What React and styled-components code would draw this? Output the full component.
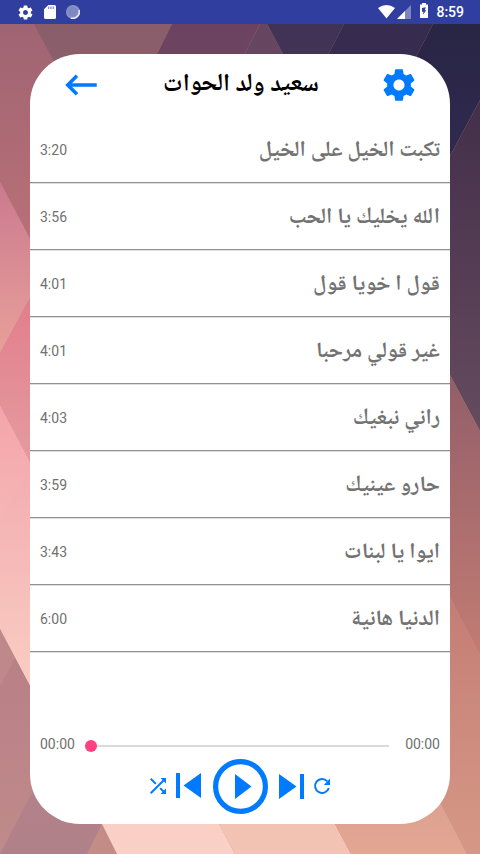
import styled, {createGlobalStyle} from "styled-components";
import {MdKeyboardBackspace, MdShuffle} from "react-icons/md";

const GlobalStyle = createGlobalStyle`
  * {
    box-sizing: border-box;
  }

  body {
    margin: 0;
    overflow: hidden;
    font-family: Roboto, sans-serif;
  }
`;

const Screen = styled.div`
  position: relative;
  display: flex;
  flex-direction: column;
  width: 480px;
  height: 854px;
  overflow: hidden;
`;

const Backdrop = styled.svg`
  position: absolute;
  inset: 0;
  z-index: -1;
`;

const StatusBar = styled.div`
  display: flex;
  align-items: center;
  justify-content: space-between;
  height: 24px;
  flex: none;
  padding: 0 16px 0 17px;
  background: #303e9f;
  color: #fff;
`;

const StatusGroup = styled.div`
  display: flex;
  align-items: center;
  gap: ${(props) => props.$gap};

  svg {
    display: block;
  }
`;

const Clock = styled.span`
  font-size: 14px;
  font-weight: 500;
  line-height: 24px;
`;

const Card = styled.main`
  display: flex;
  flex-direction: column;
  flex: 1;
  margin: 30px;
  border-radius: 50px;
  background: #fff;
  overflow: hidden;
`;

const Header = styled.header`
  display: flex;
  align-items: center;
  justify-content: space-between;
  height: 62px;
  flex: none;
  padding: 0 32px 0 30px;
`;

const IconButton = styled.button`
  display: flex;
  padding: 0;
  border: 0;
  background: none;
  color: #007aff;
`;

const Title = styled.h1`
  margin: 0;
  color: #000;
  font-family: "Noto Naskh Arabic UI", "Noto Naskh Arabic", "Noto Sans Arabic", "DejaVu Sans", sans-serif;
  font-size: 24.5px;
  font-weight: 700;
  line-height: 30px;
  white-space: nowrap;
`;

const SongList = styled.ul`
  margin: 0;
  padding: 0;
  list-style: none;
`;

const SongRow = styled.li`
  display: flex;
  align-items: center;
  justify-content: space-between;
  height: 67px;
  padding: 2px 10px 0;
  border-bottom: 1px solid #929292;
  box-shadow: 0 1px 0 #dedede;
  color: #737373;
`;

const Time = styled.span`
  font-size: 14px;
  line-height: 20px;
  color: #707070;
`;

const SongName = styled.span`
  font-family: "Noto Naskh Arabic UI", "Noto Naskh Arabic", "Noto Sans Arabic", "DejaVu Sans", sans-serif;
  font-size: 22px;
  font-weight: 700;
  line-height: 30px;
  white-space: nowrap;
`;

const Player = styled.footer`
  margin-top: auto;
  height: 91px;
`;

const Progress = styled.div`
  display: flex;
  align-items: center;
  height: 22px;
  padding: 0 10px;
`;

const Track = styled.div`
  display: flex;
  align-items: center;
  flex: 1;
  margin: 4px 16px 0 10px;

  &::before {
    content: "";
    width: 12px;
    height: 12px;
    border-radius: 50%;
    background: #ff4081;
  }

  &::after {
    content: "";
    flex: 1;
    height: 2px;
    background: #dadada;
  }
`;

const Controls = styled.div`
  display: flex;
  align-items: center;
  justify-content: center;
  height: 62px;
`;

const SkipIcon = styled.svg`
  display: block;
  margin: ${(props) => props.$margin};
  transform: ${(props) => (props.$flip ? "scaleX(-1)" : "none")};
`;

const songs = [
    {name: "تكبت الخيل على الخيل", time: "3:20"},
    {name: "الله يخليك يا الحب", time: "3:56"},
    {name: "قول ا خويا قول", time: "4:01"},
    {name: "غير قولي مرحبا", time: "4:01"},
    {name: "راني نبغيك", time: "4:03"},
    {name: "حارو عينيك", time: "3:59"},
    {name: "ايوا يا لبنات", time: "3:43"},
    {name: "الدنيا هانية", time: "6:00"},
]

// every facet is a polygon with its own top-to-bottom fade
const facets = [
    {points: "0,24 172,24 120,120 30,239 0,182", from: [24, "#9f6473"], to: [239, "#b97076"]},
    {points: "34,24 172,24 142,84 66,84", from: [24, "#895d69"], to: [84, "#8d5f6c"]},
    {points: "172,24 260,24 229,84 142,84", from: [24, "#6b4361"], to: [84, "#70455f"]},
    {points: "260,24 267,24 299,84 229,84", from: [24, "#65455f"], to: [84, "#684861"]},
    {points: "267,24 344,24 313,84 299,84", from: [24, "#403355"], to: [84, "#443455"]},
    {points: "344,24 433,24 402,84 313,84", from: [24, "#352b4e"], to: [84, "#3b2f51"]},
    {points: "433,24 480,24 480,100 450,156 402,84", from: [24, "#292544"], to: [156, "#302a50"]},
    {points: "480,100 480,431 450,375 450,156", from: [100, "#432f4a"], to: [431, "#654b5e"]},
    {points: "450,375 480,431 480,655 450,597", from: [375, "#935e69"], to: [655, "#c27c73"]},
    {points: "450,597 480,655 480,854 467,854 441,803 430,780", from: [597, "#c47d75"], to: [854, "#d69886"]},
    {points: "0,182 30,239 30,298 0,353", from: [182, "#cb798f"], to: [353, "#e8a099"]},
    {points: "30,298 30,462 0,405 0,353", from: [298, "#e27e8c"], to: [462, "#e59b9f"]},
    {points: "0,405 30,462 30,686 0,629", from: [405, "#f4a4aa"], to: [686, "#f9d0c5"]},
    {points: "30,465 30,686 0,629 0,520", from: [465, "#f3acb0"], to: [686, "#f9cdc2"]},
    {points: "0,629 30,686 102,824 87,854 0,854", from: [629, "#bf888a"], to: [854, "#be8788"]},
    {points: "15,658 30,686 60,740 33,791 0,853 0,687", from: [658, "#b98087"], to: [854, "#c08a8a"]},
    {points: "33,791 60,740 102,824 87,854 0,854", from: [740, "#b38189"], to: [854, "#b1818a"]},
    {points: "102,824 117,854 87,854", from: [824, "#c48c86"], to: [854, "#c38c87"]},
    {points: "102,824 81,784 198,784 235,854 117,854", from: [784, "#f9cdc2"], to: [854, "#fad1c7"]},
    {points: "219,824 335,824 351,854 235,854", from: [824, "#f2c2b2"], to: [854, "#f3c4b5"]},
    {points: "335,824 320,794 436,794 467,854 351,854", from: [794, "#dda08f"], to: [854, "#e2a693"]},
]

function Wallpaper() {
    return (
        <Backdrop width="480" height="854" viewBox="0 0 480 854" aria-hidden="true">
            <defs>
                {facets.map(({from, to}, i) => (
                    <linearGradient key={i} id={`facet${i}`} gradientUnits="userSpaceOnUse" x1="0" x2="0" y1={from[0]} y2={to[0]}>
                        <stop offset="0" stopColor={from[1]}/>
                        <stop offset="1" stopColor={to[1]}/>
                    </linearGradient>
                ))}
            </defs>
            <rect width="480" height="854" fill="#bd8686"/>
            {facets.map(({points}, i) => <polygon key={i} points={points} fill={`url(#facet${i})`}/>)}
        </Backdrop>
    )
}

// eslint-disable-next-line react/prop-types
function GearIcon({size}) {
    return (
        <svg width={size} height={size} viewBox="0 0 24 24" fill="currentColor">
            <path d="M19.43 12.98c.04-.32.07-.64.07-.98s-.03-.66-.07-.98l2.110-1.650c.19-.15.24-.42.12-.64l-2-3.460c-.12-.22-.39-.3-.61-.22l-2.490 1c-.52-.4-1.080-.73-1.690-.98l-.38-2.650C14.460 2.180 14.250 2 14 2h-4c-.25 0-.46.18-.49.42l-.38 2.650c-.61.25-1.170.59-1.690.98l-2.490-1c-.23-.09-.49 0-.61.22l-2 3.460c-.13.22-.07.49.12.64l2.110 1.650c-.04.32-.07.65-.07.98s.03.66.07.98l-2.110 1.650c-.19.15-.24.42-.12.64l2 3.460c.12.22.39.3.61.22l2.490-1c.52.4 1.080.73 1.690.98l.38 2.650c.03.24.24.42.49.42h4c.25 0 .46-.18.49-.42l.38-2.650c.61-.25 1.170-.59 1.690-.98l2.490 1c.23.09.49 0 .61-.22l2-3.460c.12-.22.07-.49-.12-.64l-2.110-1.650zM12 15.500c-1.930 0-3.500-1.570-3.500-3.500s1.570-3.500 3.500-3.500 3.500 1.570 3.500 3.500-1.570 3.500-3.500 3.500z"/>
        </svg>
    )
}

function SdCardIcon() {
    return (
        <svg width="12" height="14" viewBox="0 0 12 14">
            <path fill="#fff" d="M4.300 0h6.200A1.500 1.500 0 0 1 12 1.500v11a1.500 1.500 0 0 1-1.500 1.500h-9A1.500 1.500 0 0 1 0 12.500V4.300z"/>
            <path fill="#8c93c9" d="M4 1.500h1.300v2.500H4zM6.300 1.500h1.300v2.500H6.300zM8.600 1.500h1.300v2.500H8.600z"/>
        </svg>
    )
}

function SyncIcon() {
    return (
        <svg width="14" height="14" viewBox="0 0 14 14">
            <circle cx="7" cy="7" r="7" fill="#8c93c9"/>
            <path d="M13 5A6.400 6.400 0 0 1 5 13" fill="none" stroke="#e3e5f3" strokeWidth="1.600"/>
            <circle cx="6.500" cy="6.500" r="5.300" fill="#7f88c1"/>
        </svg>
    )
}

function WifiIcon() {
    return (
        <svg width="17" height="14" viewBox="0 0 17 14">
            <path fill="#fff" d="M0 3.100Q8.500-2.900 17 3.100L8.500 13.600z"/>
        </svg>
    )
}

function SignalIcon() {
    return (
        <svg width="14" height="14" viewBox="0 0 14 14">
            <path fill="#7c85bf" d="M14 0v14H0z"/>
            <path fill="#fff" d="M8 6v8H0z"/>
        </svg>
    )
}

const BatterySvg = styled.svg`
  margin: 0 8px 3px 7px;
`;

function BatteryIcon() {
    return (
        <BatterySvg width="8" height="15" viewBox="0 0 8 15">
            <path fill="#fff" d="M2 0h4v1.500h2V15H0V1.500h2z"/>
            <path fill="#303e9f" d="M5.800 4.300 2 5v3.700h1.500L2.800 12 6.200 7.300H4.700z"/>
        </BatterySvg>
    )
}

function RefreshIcon() {
    return (
        <svg width="24" height="24" viewBox="0 0 24 24">
            <path d="M18.800 14A7 7 0 1 1 17.300 7.300" fill="none" stroke="currentColor" strokeWidth="2"/>
            <path d="M20 4.500V11h-6.200z" fill="currentColor"/>
        </svg>
    )
}

function Skip(props) {
    return (
        <SkipIcon width="25" height="25" viewBox="0 0 25 25" fill="#007aff" {...props}>
            <path d="M0 0 17.500 12.500 0 25zM21 0h4v25h-4z"/>
        </SkipIcon>
    )
}

function App() {
    return (
        <>
            <GlobalStyle/>
            <Screen>
                <Wallpaper/>
                <StatusBar>
                    <StatusGroup $gap="10px">
                        <GearIcon size={17}/>
                        <SdCardIcon/>
                        <SyncIcon/>
                    </StatusGroup>
                    <StatusGroup $gap="2px">
                        <WifiIcon/>
                        <SignalIcon/>
                        <StatusGroup $gap="0">
                            <BatteryIcon/>
                            <Clock>8:59</Clock>
                        </StatusGroup>
                    </StatusGroup>
                </StatusBar>
                <Card>
                    <Header>
                        <IconButton aria-label="back"><MdKeyboardBackspace size={42}/></IconButton>
                        <Title dir="rtl">سعيد ولد الحوات</Title>
                        <IconButton aria-label="settings"><GearIcon size={38}/></IconButton>
                    </Header>
                    <SongList>
                        {songs.map(({name, time}) => (
                            <SongRow key={name}>
                                <Time>{time}</Time>
                                <SongName dir="rtl">{name}</SongName>
                            </SongRow>
                        ))}
                    </SongList>
                    <Player>
                        <Progress>
                            <Time>00:00</Time>
                            <Track/>
                            <Time>00:00</Time>
                        </Progress>
                        <Controls>
                            <IconButton aria-label="shuffle"><MdShuffle size={24}/></IconButton>
                            <IconButton aria-label="previous"><Skip $flip $margin="0 12px 2px 6px"/></IconButton>
                            <IconButton aria-label="play">
                                <svg width="55" height="55" viewBox="0 0 55 55">
                                    <circle cx="27.500" cy="27.500" r="24.900" fill="none" stroke="#007aff" strokeWidth="5.200"/>
                                    <path d="M22 15 38.500 27.500 22 40z" fill="#007aff"/>
                                </svg>
                            </IconButton>
                            <IconButton aria-label="next"><Skip $margin="0 6px 0 11px"/></IconButton>
                            <IconButton aria-label="repeat"><RefreshIcon/></IconButton>
                        </Controls>
                    </Player>
                </Card>
            </Screen>
        </>
    );
}

export default App;
